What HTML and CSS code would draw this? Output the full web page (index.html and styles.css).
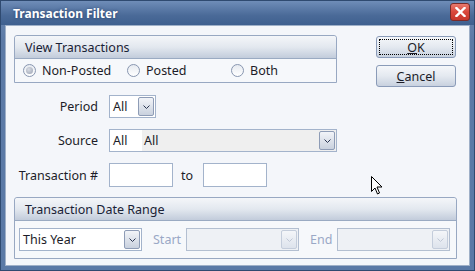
FILE: index.html
```html
<!DOCTYPE html>
<html>
<head>
<meta charset="utf-8">
<link rel="stylesheet" href="styles.css">
</head>
<body>
<div class="window">
  <div class="titlebar">
    <span class="title">Transaction Filter</span>
    <span class="close"><svg width="11" height="10" viewBox="0 0 11 10"><path d="M1.5 1 L9.5 9 M9.5 1 L1.5 9" stroke="#fff" stroke-width="2.4" stroke-linecap="square"/></svg></span>
  </div>
  <div class="client">
    <div class="top">
      <div class="left">
        <div class="group view">
          <div class="ghead">View Transactions</div>
          <div class="gbody radios">
            <label class="radio r1"><span class="dot checked"></span>Non-Posted</label>
            <label class="radio r2"><span class="dot"></span>Posted</label>
            <label class="radio r3"><span class="dot"></span>Both</label>
          </div>
        </div>
        <div class="form">
          <span class="lbl">Period</span>
          <div class="select period"><span class="val">All</span><span class="arrow"><svg width="7" height="4" viewBox="0 0 7 4"><path d="M0.5 0.5 L3.5 3.5 L6.5 0.5" fill="none" stroke="#2a3550" stroke-width="1"/></svg></span></div>
          <span class="lbl">Source</span>
          <div class="select source"><span class="val">All</span><span class="val2">All</span><span class="arrow"><svg width="7" height="4" viewBox="0 0 7 4"><path d="M0.5 0.5 L3.5 3.5 L6.5 0.5" fill="none" stroke="#2a3550" stroke-width="1"/></svg></span></div>
          <span class="lbl">Transaction #</span>
          <div class="range"><div class="input"></div><span class="to">to</span><div class="input"></div></div>
        </div>
      </div>
      <div class="buttons">
        <div class="btn ok"><span class="focus"><u>O</u>K</span></div>
        <div class="btn"><span><u>C</u>ancel</span></div>
      </div>
    </div>
    <div class="group date">
      <div class="ghead">Transaction Date Range</div>
      <div class="gbody daterow">
        <div class="select year"><span class="val">This Year</span><span class="arrow"><svg width="7" height="4" viewBox="0 0 7 4"><path d="M0.5 0.5 L3.5 3.5 L6.5 0.5" fill="none" stroke="#2a3550" stroke-width="1"/></svg></span></div>
        <span class="dlbl">Start</span>
        <div class="select disabled dsel"><span class="arrow"><svg width="7" height="4" viewBox="0 0 7 4"><path d="M0.5 0.5 L3.5 3.5 L6.5 0.5" fill="none" stroke="#c0c8d6" stroke-width="1"/></svg></span></div>
        <span class="dlbl">End</span>
        <div class="select disabled dsel"><span class="arrow"><svg width="7" height="4" viewBox="0 0 7 4"><path d="M0.5 0.5 L3.5 3.5 L6.5 0.5" fill="none" stroke="#c0c8d6" stroke-width="1"/></svg></span></div>
      </div>
    </div>
    <svg class="cursor" width="13" height="20" viewBox="0 0 13 20"><path d="M0.5 0.5 L0.5 15.5 L4 12 L6.5 18 L8.5 17 L6 11 L11 11 Z" fill="#fff" stroke="#000" stroke-width="1"/></svg>
  </div>
</div>
</body>
</html>
```
FILE: styles.css
```css
* { box-sizing: border-box; }
html, body { margin: 0; padding: 0; }
body {
  width: 475px; height: 271px; overflow: hidden;
  font-family: "Noto Sans", "Liberation Sans", sans-serif;
  font-size: 12px; color: #1c1c28;
}
.window {
  width: 475px; height: 271px;
  border: 1px solid #2f4a70;
  background: linear-gradient(#6d8ab4, #5c7aa6 40px, #5a79a6);
  padding: 0 4px 4px 4px;
  display: flex; flex-direction: column;
}
.titlebar {
  height: 24px;
  background: linear-gradient(#6f8db8, #4a6a98 60%, #3f608f);
  margin: 0 -4px; padding: 0 4px 0 12px;
  display: flex; align-items: center; justify-content: space-between;
}
.title {
  color: #fff; font-weight: bold; font-size: 12px;
  text-shadow: 0 0 3px rgba(20,40,80,.6);
}
.close {
  width: 20px; height: 18px; margin-top: -3px;
  background: linear-gradient(#e87a6e, #d9473b 50%, #c7372c);
  border: 1px solid #7a2a28; border-radius: 3px;
  display: flex; align-items: center; justify-content: center;
}
.client {
  position: relative;
  flex: 1;
  background: #f4f6fa;
  border: 1px solid #9fb0c8;
  padding: 9px 9px 0 8px;
}
.top { display: flex; }
.left { width: 323px; }
.group {
  border: 1px solid #98a8c2;
  border-radius: 3px 3px 0 0;
  background: #f6f8fb;
}
.ghead {
  height: 23px;
  padding-left: 10px;
  display: flex; align-items: center;
  font-size: 12.5px; color: #1a2236;
  background: linear-gradient(#f4f6f9, #e3e8ef 50%, #c2ccdb);
  border-bottom: 1px solid #9aaac2;
  border-radius: 3px 3px 0 0;
}
.radios { height: 23px; display: flex; align-items: center; position: relative; }
.radio { display: flex; align-items: center; font-size: 12.5px; position: absolute; }
.r1 { left: 8px; }
.r2 { left: 112px; }
.r3 { left: 216px; }
.dot {
  width: 13px; height: 13px; border-radius: 50%;
  border: 1px solid #8896b0; background: linear-gradient(#e6eaf0, #fff);
  margin-right: 6px; display: inline-flex; align-items: center; justify-content: center;
}
.dot.checked::after {
  content: ""; width: 7px; height: 7px; border-radius: 50%;
  background: radial-gradient(circle at 40% 35%, #d8dce4, #9aa2b2);
}
.form {
  margin-top: 12px;
  display: grid;
  grid-template-columns: 84px auto;
  column-gap: 11px;
  row-gap: 11px;
  align-items: center;
}
.lbl { text-align: right; font-size: 12.5px; }
.select {
  height: 23px; border: 1px solid #a3b3cb; background: #fff;
  display: flex; align-items: center; position: relative;
}
.val { padding-left: 3px; font-size: 12.5px; }
.arrow {
  position: absolute; right: 1px; top: 1px;
  width: 16px; height: 19px;
  border: 1px solid #8e9cb6; border-radius: 2px;
  background: linear-gradient(#f2f4f8, #c9d1de);
  display: flex; align-items: center; justify-content: center;
}
.period { width: 47px; }
.source { width: 228px; }
.source .val { width: 32px; }
.val2 {
  flex: 1; align-self: stretch; background: #efefef;
  display: flex; align-items: center; padding-left: 2px; font-size: 12.5px;
}
.range { display: flex; align-items: center; }
.input { width: 64px; height: 24px; border: 1px solid #a3b3cb; background: #fff; }
.to { width: 30px; padding-left: 8px; font-size: 12.5px; }
.buttons {
  margin-left: 39px; margin-top: 1px;
  display: flex; flex-direction: column; gap: 7px;
}
.btn {
  width: 80px; height: 22px;
  border: 1px solid #8a9bb8; border-radius: 3px;
  background: linear-gradient(#f5f7fa, #e4e9f0 50%, #c8d1df);
  display: flex; align-items: center; justify-content: center;
  font-size: 12.5px; padding: 2px;
}
.btn span { flex: 1; align-self: stretch; display: flex; align-items: center; justify-content: center; }
.btn .focus { border: 1px dotted #000; }
.date { margin-top: 10px; width: 443px; }
.daterow { height: 37px; display: flex; align-items: center; padding-left: 4px; }
.year { width: 123px; }
.dlbl { color: #9aa8c6; font-size: 12.5px; margin: 0 5px 0 11px; }
.dsel { width: 113px; }
.disabled { background: #eef1f5; border-color: #b3bfd1; }
.disabled .arrow { background: linear-gradient(#f4f6f9, #dde3ec); border-color: #c4cddb; }
.cursor { position: absolute; left: 365px; top: 150px; }
```
